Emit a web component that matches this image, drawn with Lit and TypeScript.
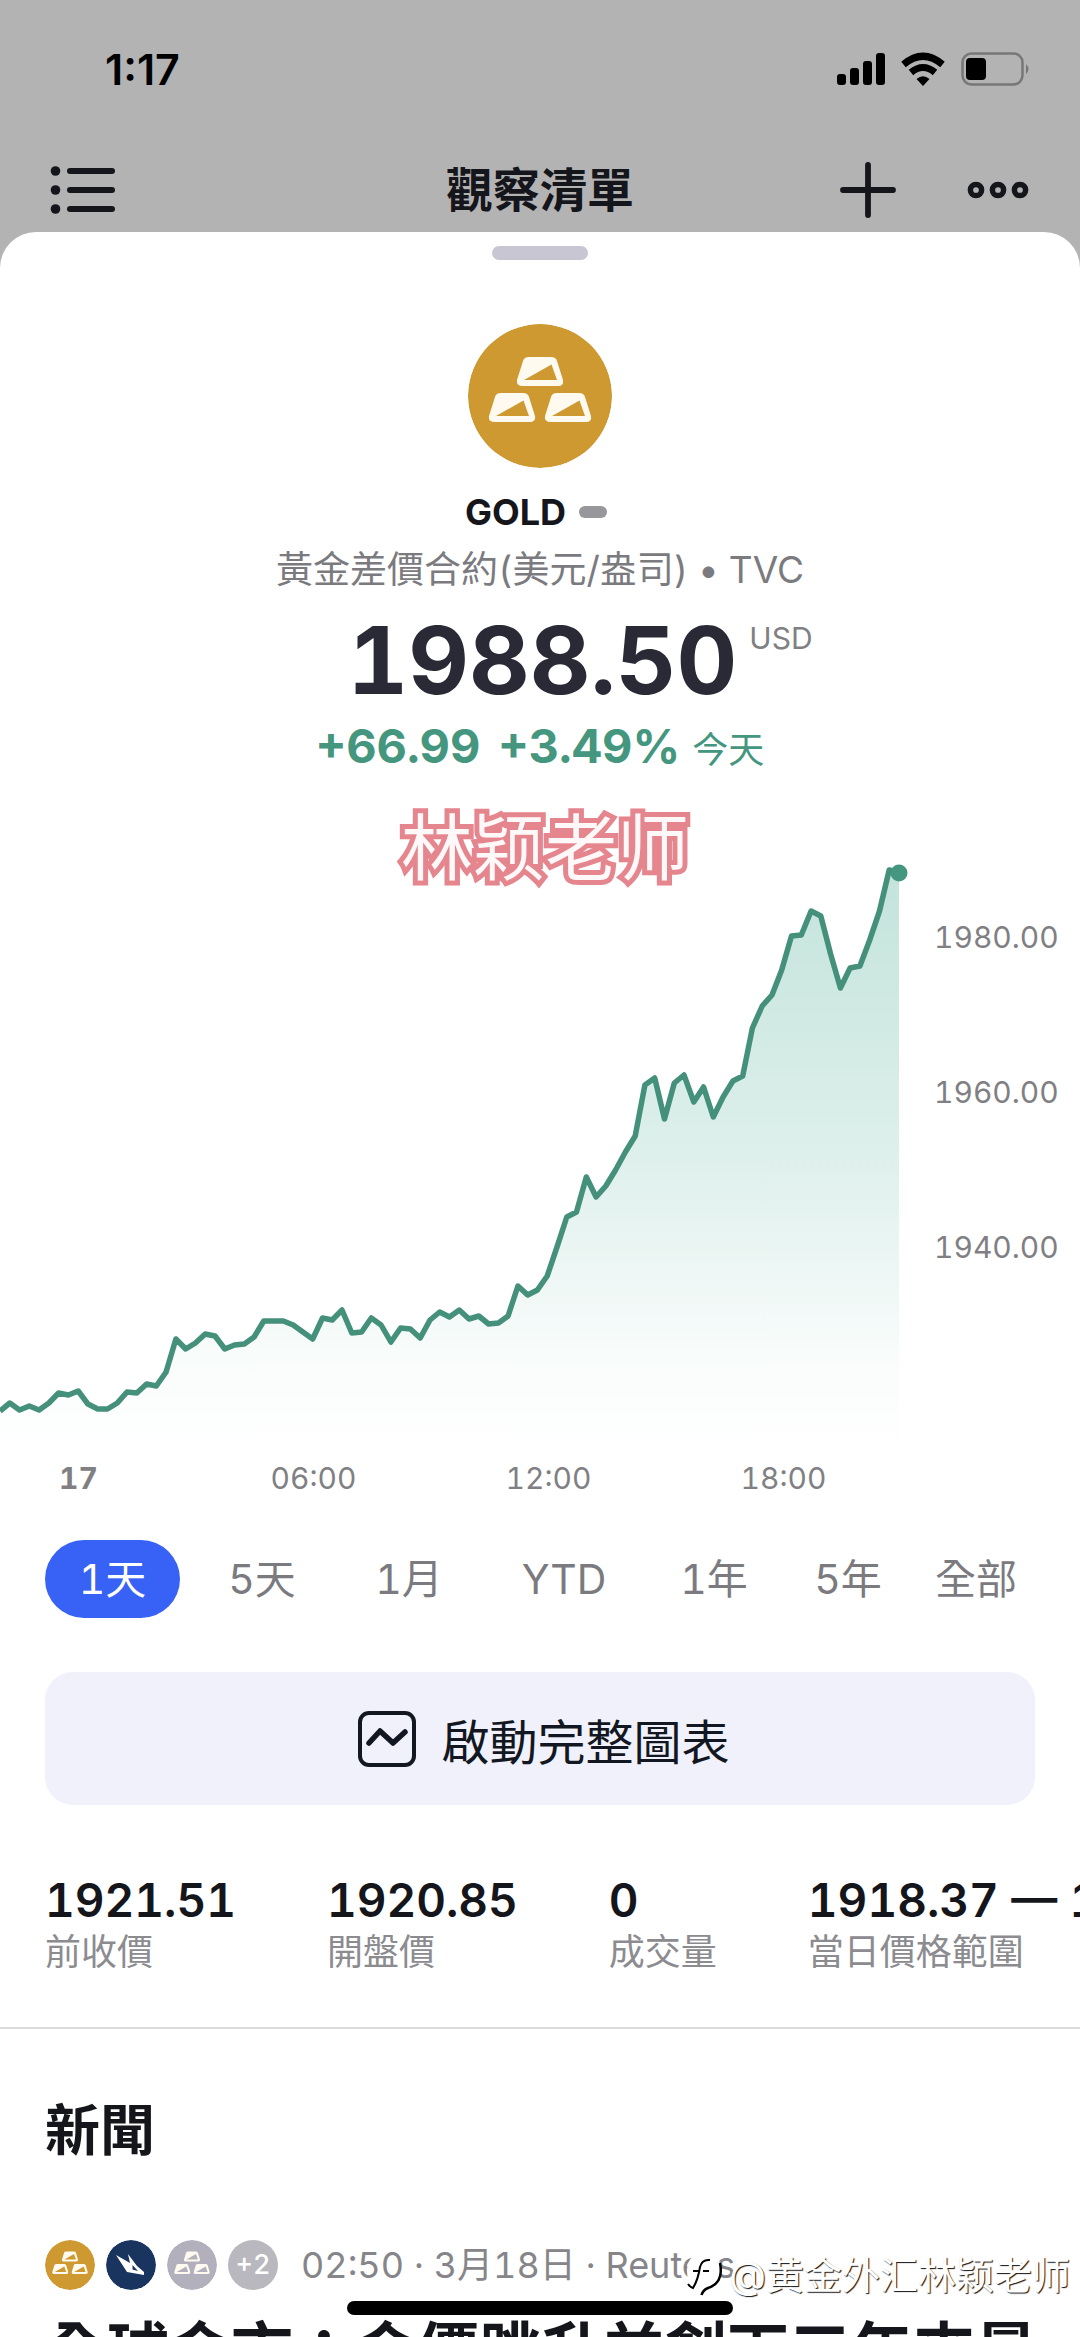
import { LitElement, html, css, svg } from "lit";
import { customElement, property, state } from "lit/decorators.js";
import { classMap } from "lit/directives/class-map.js";

/* Vertical plot positions of the intraday series, in chart units. */
const SERIES = [
  560, 552, 559, 555, 559, 552, 542, 544, 540, 553, 558, 558, 552, 541, 542, 533, 535, 521, 488, 498,
  492, 483, 485, 498, 494, 493, 486, 470, 470, 470, 474, 481, 488, 467, 469, 459, 482, 481, 467, 474,
  491, 477, 478, 487, 469, 461, 466, 459, 468, 465, 473, 472, 465, 435, 444, 439, 425, 396, 366, 361,
  326, 346, 335, 319, 301, 285, 234, 227, 268, 232, 224, 251, 236, 266, 246, 230, 225, 177, 155, 144,
  119, 85, 84, 60, 65, 103, 137, 117, 115, 89, 60, 19, 22,
];
const PLOT_W = 899;
const PLOT_H = 600;

const FONT = css`
  :host {
    font-family: Inter, "Noto Sans CJK TC", "Liberation Sans", sans-serif;
    font-variant-numeric: tabular-nums;
  }
`;

@customElement("gold-badge")
class GoldBadge extends LitElement {
  static styles = css`
    :host { display: block; border-radius: 50%; overflow: hidden; }
    svg { display: block; width: 100%; height: auto; }
  `;
  @property() tone = "#cd9930";
  render() {
    const bar = (x: number, y: number) => svg`
      <g transform="translate(${x} ${y})">
        <path d="M12 0H34Q39 0 40 4L46 23Q47 29 41 29H6Q-1 29 0 23L6 4Q7 0 12 0Z" fill="#fffaf0"/>
        <path d="M7 23L34.500 7.500L40 23Z" fill=${this.tone}/>
      </g>`;
    return html`<svg viewBox="0 0 144 144" aria-hidden="true">
      <circle cx="72" cy="72" r="72" fill=${this.tone} />
      ${bar(49, 33)}${bar(21, 69)}${bar(77, 69)}
    </svg>`;
  }
}

@customElement("price-chart")
class PriceChart extends LitElement {
  static styles = [
    FONT,
    css`
      :host { display: block; color: #808084; font-size: 30px; line-height: 36px; }
      .body { display: grid; grid-template-columns: minmax(0, 1fr) 170px; }
      .plot { display: block; width: 100%; height: auto; }
      .prices { display: flex; flex-direction: column; gap: 119px; padding: 68px 0 0 24px; }
      .times { display: flex; margin: 9px 0 0 -39px; }
      .time { width: 235px; text-align: center; }
      .day { font-weight: 700; }
    `,
  ];
  render() {
    const pts = SERIES.map((y, i) => `${((i * PLOT_W) / (SERIES.length - 1)).toFixed(1)},${y}`);
    const line = "M" + pts.join("L");
    return html`
      <div class="body">
        <svg class="plot" viewBox="0 0 910 ${PLOT_H}" role="img" aria-label="GOLD">
          <defs>
            <linearGradient id="fade" x1="0" y1="0" x2="0" y2="1">
              <stop offset="0" stop-color="#42a88f" stop-opacity="0.32" />
              <stop offset="0.5" stop-color="#42a88f" stop-opacity="0.17" />
              <stop offset="0.85" stop-color="#42a88f" stop-opacity="0.03" />
              <stop offset="1" stop-color="#42a88f" stop-opacity="0" />
            </linearGradient>
          </defs>
          <path d="${line}V${PLOT_H}H0Z" fill="url(#fade)" />
          <path d=${line} fill="none" stroke="#44907b" stroke-width="5.500" stroke-linejoin="round" />
          <circle cx="899" cy="22" r="8.500" fill="#44967f" />
        </svg>
        <div class="prices"><span>1980.00</span><span>1960.00</span><span>1940.00</span></div>
      </div>
      <div class="times">
        <span class="time day">17</span><span class="time">06:00</span>
        <span class="time">12:00</span><span class="time">18:00</span>
      </div>
    `;
  }
}

@customElement("app-root")
class AppRoot extends LitElement {
  static styles = [
    FONT,
    css`
      :host {
        display: flex; flex-direction: column; position: relative;
        height: 100vh; overflow: hidden; background: #b3b3b3; color: #15151c;
      }
      * { box-sizing: border-box; }
      h1, h2, h3, p, dl, dd, dt { margin: 0; font-weight: inherit; }
      button { border: 0; padding: 0; background: none; font: inherit; color: inherit; font-variant-numeric: inherit; }
      svg { display: block; }
      .status {
        display: flex; justify-content: space-between; align-items: center;
        padding: 44px 50px 0 105px; font-size: 43px; line-height: 50px; font-weight: 600; color: #000;
        font-variant-numeric: normal;
      }
      .signals { display: flex; align-items: center; gap: 15px; }
      .nav {
        display: grid; grid-template-columns: 1fr auto 1fr; align-items: center;
        padding: 66px 50px 12px; height: 138px;
      }
      .nav h1 { font-size: 47px; line-height: 60px; font-weight: 600; }
      .actions { display: flex; justify-content: flex-end; align-items: center; gap: 70px; }
      .sheet {
        flex: 1; background: #fff; border-radius: 36px 36px 0 0;
        padding-top: 14px; min-height: 0;
      }
      .grip { width: 96px; height: 14px; border-radius: 7px; background: #c8c6d2; margin: 0 auto; }
      .quote { display: flex; flex-direction: column; align-items: center; padding-top: 64px; }
      .logo { width: 144px; }
      .symbol {
        display: flex; align-items: center; gap: 13px; margin-top: 22px; padding-right: 8px;
        font-size: 36px; line-height: 44px; font-weight: 700;
      }
      .closed { width: 28px; height: 12px; border-radius: 6px; background: #98989c; }
      .name { margin-top: 13px; font-size: 37px; line-height: 46px; color: #7b7b7f; }
      .price { display: flex; align-items: flex-start; gap: 12px; margin-top: 13px; padding-left: 80px; }
      .last { font-size: 94px; line-height: 108px; font-weight: 700; color: #2a2a37; }
      .unit { font-size: 30px; line-height: 36px; color: #808084; margin-top: 14px; }
      .change {
        display: flex; align-items: baseline; gap: 18px; margin-top: 2px;
        font-size: 47px; line-height: 60px; font-weight: 700; color: #44967f;
      }
      .today { font-size: 36px; font-weight: 400; margin-left: -6px; }
      .chart { margin-top: 71px; }
      .ranges {
        display: grid; grid-template-columns: 135fr 164fr 130fr 180fr 120fr 148fr 108fr;
        margin: 44px 50px 0 45px; font-size: 41px; line-height: 78px; color: #7b7b7f;
      }
      .range { border-radius: 39px; height: 78px; }
      .range.on { background: #3861f6; color: #fff; }
      .launch {
        display: flex; align-items: center; justify-content: center; gap: 25px;
        width: calc(100% - 90px); height: 133px; margin: 54px 45px 0; padding-left: 8px;
        border-radius: 28px; background: #f0f1fb; font-size: 48px; color: #131722;
      }
      .stats { display: flex; gap: 91px; padding: 70px 0 0 45px; white-space: nowrap; overflow: hidden; }
      .stat { display: flex; flex-direction: column-reverse; flex: none; }
      .stat dd { font-size: 46px; line-height: 50px; font-weight: 600; }
      .stat dt { font-size: 36px; line-height: 54px; color: #8b8b90; }
      .rule { border: 0; height: 2px; background: #dadadc; margin: 48px 0 0; }
      .news { padding: 62px 45px 0; white-space: nowrap; }
      .news h2 { font-size: 55px; line-height: 78px; font-weight: 700; }
      .meta {
        display: flex; align-items: center; gap: 11px; margin-top: 71px;
        font-size: 36px; line-height: 50px; color: #85858a;
      }
      .dot { width: 50px; height: 50px; border-radius: 50%; flex: none; }
      .more { background: #b9b8be; color: #fff; font-size: 27px; font-weight: 500; text-align: center; }
      .when { margin-left: 12px; }
      .headline { font-size: 62px; line-height: 74px; font-weight: 700; margin-top: 25px; }
      .stamp {
        position: absolute; top: 791px; left: 10px; right: 0; text-align: center;
        font-family: "Noto Sans CJK SC", sans-serif; font-size: 72px; line-height: 104px;
        color: #fff8f8; -webkit-text-stroke: 10px #e5858e; paint-order: stroke fill;
      }
      .home {
        position: absolute; bottom: 22px; left: 50%; width: 386px; height: 14px;
        margin-left: -193px; border-radius: 7px; background: #000;
      }
      .credit {
        position: absolute; right: 10px; bottom: 34px; display: flex; align-items: center; gap: 6px;
        font-family: Inter, "Noto Sans CJK SC", sans-serif; font-size: 38px; line-height: 56px;
        color: #fff; text-shadow: 1px 1px 1px #111;
      }
    `,
  ];

  @state() private range = "1天";

  render() {
    const ranges = ["1天", "5天", "1月", "YTD", "1年", "5年", "全部"];
    const stats = [
      ["1921.51", "前收價"],
      ["1920.85", "開盤價"],
      ["0", "成交量"],
      ["1918.37 — 1988.50", "當日價格範圍"],
    ];
    return html`
      <div class="status">
        <span>1:17</span>
        <div class="signals">
          <svg width="48" height="32" viewBox="0 0 48 32">
            <rect x="0" y="21" width="9" height="11" rx="3" /><rect x="13" y="15" width="9" height="17" rx="3" />
            <rect x="26" y="8" width="9" height="24" rx="3" /><rect x="39" y="0" width="9" height="32" rx="3" />
          </svg>
          <svg width="46" height="34" viewBox="0 0 46 34">
            <path d="M3.500 12.500Q23-4 42.500 12.500M11 20.500Q23 10.500 35 20.500" fill="none" stroke="#000" stroke-width="7" />
            <path d="M23 34L16.500 27Q23 21.500 29.500 27Z" />
          </svg>
          <svg width="69" height="34" viewBox="0 0 69 34">
            <rect x="1.500" y="1.500" width="60" height="31" rx="9" fill="none" stroke="#777" stroke-width="2.500" />
            <rect x="5" y="6" width="20" height="22" rx="4" />
            <path d="M65 12Q70 17 65 22Z" fill="#777" />
          </svg>
        </div>
      </div>
      <header class="nav">
        <button aria-label="清單">
          <svg width="66" height="48" viewBox="0 0 66 48" fill="#15151c">
            <circle cx="5.500" cy="5" r="4.800" /><circle cx="5.500" cy="24" r="4.800" /><circle cx="5.500" cy="43" r="4.800" />
            <rect x="17" y="2" width="48" height="6" rx="3" /><rect x="17" y="21" width="48" height="6" rx="3" />
            <rect x="17" y="40" width="48" height="6" rx="3" />
          </svg>
        </button>
        <h1>觀察清單</h1>
        <div class="actions">
          <button aria-label="新增">
            <svg width="56" height="56" viewBox="0 0 56 56" stroke="#15151c" stroke-width="5.800" stroke-linecap="round">
              <path d="M28 3V53M3 28H53" />
            </svg>
          </button>
          <button aria-label="更多">
            <svg width="64" height="20" viewBox="0 0 64 20" fill="none" stroke="#15151c" stroke-width="5.500">
              <circle cx="10" cy="10" r="5.600" /><circle cx="32" cy="10" r="5.600" /><circle cx="54" cy="10" r="5.600" />
            </svg>
          </button>
        </div>
      </header>
      <main class="sheet">
        <div class="grip"></div>
        <section class="quote">
          <gold-badge class="logo"></gold-badge>
          <h2 class="symbol">GOLD <span class="closed"></span></h2>
          <p class="name">黃金差價合約(美元/盎司) • TVC</p>
          <p class="price"><span class="last">1988.50</span><span class="unit">USD</span></p>
          <p class="change"><span>+66.99</span><span>+3.49%</span><span class="today">今天</span></p>
        </section>
        <price-chart class="chart"></price-chart>
        <div class="ranges">
          ${ranges.map(
            (r) => html`<button
              class=${classMap({ range: true, on: r === this.range })}
              aria-pressed=${r === this.range}
              @click=${() => (this.range = r)}
            >${r}</button>`
          )}
        </div>
        <button class="launch">
          <svg width="58" height="56" viewBox="0 0 58 56" fill="none" stroke="#131722">
            <rect x="2" y="2" width="54" height="52" rx="9" stroke-width="4" />
            <path d="M11 32L22 20L35 32L47 21" stroke-width="5.500" stroke-linejoin="round" stroke-linecap="round" />
          </svg>
          啟動完整圖表
        </button>
        <dl class="stats">
          ${stats.map(([v, k]) => html`<div class="stat"><dt>${k}</dt><dd>${v}</dd></div>`)}
        </dl>
        <hr class="rule" />
        <section class="news">
          <h2>新聞</h2>
          <div class="meta">
            <gold-badge class="dot"></gold-badge>
            <svg class="dot" viewBox="0 0 50 50">
              <circle cx="25" cy="25" r="25" fill="#18345f" />
              <path d="M10 15L24 23L22 14L31 26L38 32L38 35L21 32Z" fill="#fff" />
              <path d="M26.500 25L32 31L26.500 29.500Z" fill="#18345f" />
            </svg>
            <gold-badge class="dot" tone="#b2b0bc"></gold-badge>
            <span class="dot more">+2</span>
            <span class="when">02:50 · 3月18日 · Reuters</span>
          </div>
          <h3 class="headline">全球金市：金價跳升並創下三年來最</h3>
        </section>
      </main>
      <div class="stamp">林颖老师</div>
      <div class="home"></div>
      <div class="credit">
        <svg width="38" height="46" viewBox="0 0 38 46" aria-hidden="true">
          <path d="M17 2H22Q36 3 36 19Q36 35 22 38L17 44L18 36Q2 34 2 19Q2 3 17 2Z" fill="#fff" />
          <path d="M35 11Q39 31 23 36Q18 38 16.500 43" fill="none" stroke="#000" stroke-width="2.500" />
          <path d="M25 8Q17 7 15 15Q13 28 8 36Q5 35 3 32M8 19H15M18 19H24" fill="none" stroke="#000" stroke-width="2" />
        </svg>
        <span>@黄金外汇林颖老师</span>
      </div>
    `;
  }
}
